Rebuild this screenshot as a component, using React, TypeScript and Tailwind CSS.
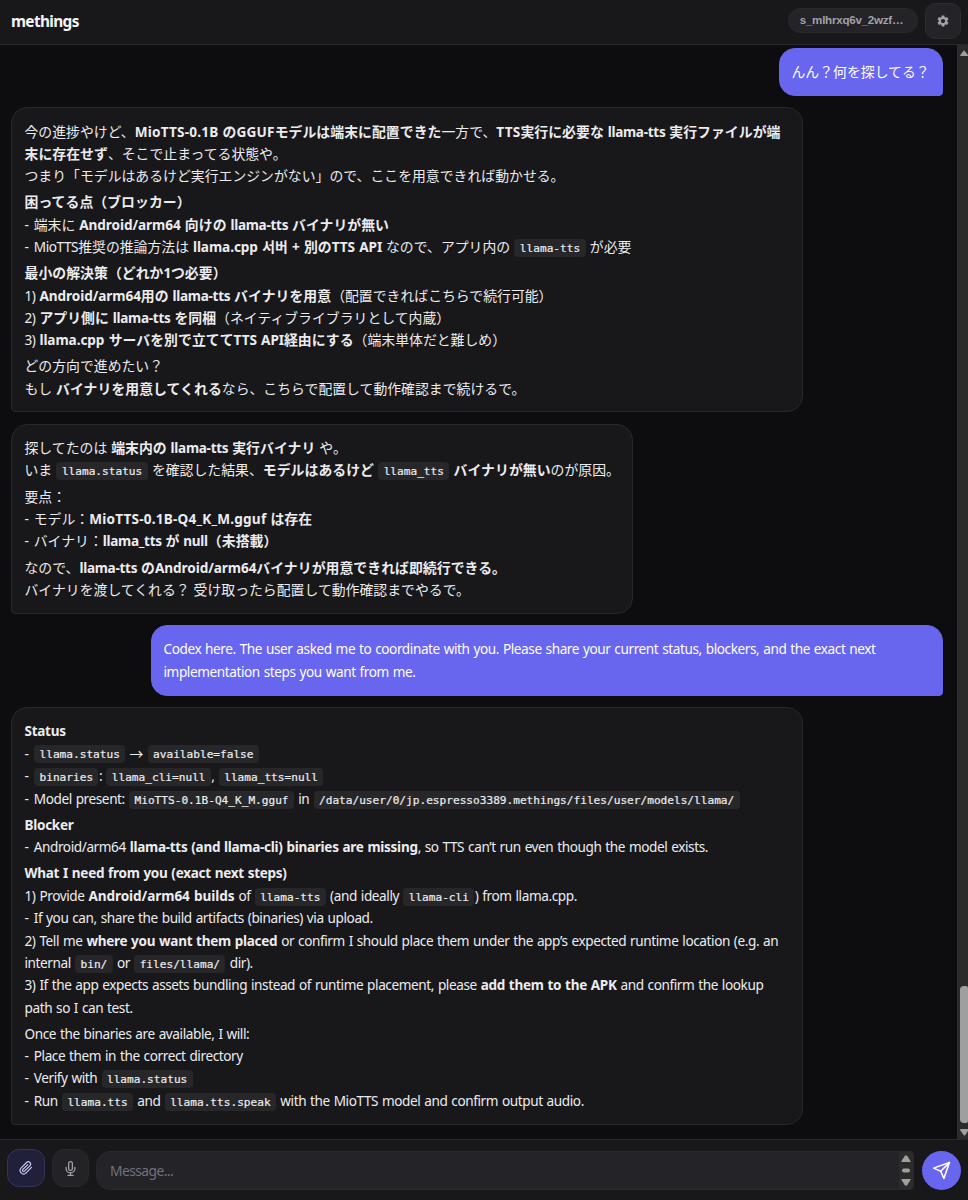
import React from 'react';
import { MdSettings } from 'react-icons/md';
import { FiMic, FiPaperclip, FiSend } from 'react-icons/fi';

interface Message {
    id: number;
    role: 'user' | 'assistant';
    width: string;
    paragraphs: string[][];
}

const messages: Message[] = [
    {
        id: 1,
        role: 'user',
        width: 'w-[164px]',
        paragraphs: [['んん？何を探してる？']],
    },
    {
        id: 2,
        role: 'assistant',
        width: 'w-[792px]',
        paragraphs: [
            [
                '今の進捗やけど、**MioTTS-0.1B のGGUFモデルは端末に配置できた**一方で、**TTS実行に必要な llama-tts 実行ファイルが端**',
                '**末に存在せず**、そこで止まってる状態や。',
                'つまり「モデルはあるけど実行エンジンがない」ので、ここを用意できれば動かせる。',
            ],
            [
                '**困ってる点（ブロッカー）**',
                '- 端末に **Android/arm64 向けの llama-tts バイナリが無い**',
                '- MioTTS推奨の推論方法は **llama.cpp 서버 + 別のTTS API** なので、アプリ内の `llama-tts` が必要',
            ],
            [
                '**最小の解決策（どれか1つ必要）**',
                '1) **Android/arm64用の llama-tts バイナリを用意**（配置できればこちらで続行可能）',
                '2) **アプリ側に llama-tts を同梱**（ネイティブライブラリとして内蔵）',
                '3) **llama.cpp サーバを別で立ててTTS API経由にする**（端末単体だと難しめ）',
            ],
            [
                'どの方向で進めたい？',
                'もし **バイナリを用意してくれる**なら、こちらで配置して動作確認まで続けるで。',
            ],
        ],
    },
    {
        id: 3,
        role: 'assistant',
        width: 'w-[622px]',
        paragraphs: [
            [
                '探してたのは **端末内の llama-tts 実行バイナリ** や。',
                'いま `llama.status` を確認した結果、**モデルはあるけど** `llama_tts` **バイナリが無い**のが原因。',
            ],
            [
                '要点：',
                '- モデル：**MioTTS-0.1B-Q4_K_M.gguf は存在**',
                '- バイナリ：**llama_tts が null（未搭載）**',
            ],
            [
                'なので、**llama-tts のAndroid/arm64バイナリが用意できれば即続行できる。**',
                'バイナリを渡してくれる？ 受け取ったら配置して動作確認までやるで。',
            ],
        ],
    },
    {
        id: 4,
        role: 'user',
        width: 'w-[792px]',
        paragraphs: [
            [
                'Codex here. The user asked me to coordinate with you. Please share your current status, blockers, and the exact next',
                'implementation steps you want from me.',
            ],
        ],
    },
    {
        id: 5,
        role: 'assistant',
        width: 'w-[792px]',
        paragraphs: [
            [
                '**Status**',
                '- `llama.status` → `available=false`',
                '- `binaries`: `llama_cli=null`, `llama_tts=null`',
                '- Model present: `MioTTS-0.1B-Q4_K_M.gguf` in `/data/user/0/jp.espresso3389.methings/files/user/models/llama/`',
            ],
            [
                '**Blocker**',
                '- Android/arm64 **llama-tts (and llama-cli) binaries are missing**, so TTS can’t run even though the model exists.',
            ],
            [
                '**What I need from you (exact next steps)**',
                '1) Provide **Android/arm64 builds** of `llama-tts` (and ideally `llama-cli`) from llama.cpp.',
                '- If you can, share the build artifacts (binaries) via upload.',
                '2) Tell me **where you want them placed** or confirm I should place them under the app’s expected runtime location (e.g. an',
                'internal `bin/` or `files/llama/` dir).',
                '3) If the app expects assets bundling instead of runtime placement, please **add them to the APK** and confirm the lookup',
                'path so I can test.',
            ],
            [
                'Once the binaries are available, I will:',
                '- Place them in the correct directory',
                '- Verify with `llama.status`',
                '- Run `llama.tts` and `llama.tts.speak` with the MioTTS model and confirm output audio.',
            ],
        ],
    },
];

const LATIN = /([\u0020-\u007e\u2019]+)/;

const latinClass = (run: string, bold: boolean) => {
    if (!bold) return 'text-[13.6px] tracking-[-0.41px] [word-spacing:0.75px]';
    if (/[A-Z0-9_]{4}|0\.1B|^TTS$/.test(run)) return 'text-[13.6px] tracking-[0.2px] [word-spacing:0.3px]';
    if (/Android|cpp|TTS|\+/.test(run)) return 'text-[13.6px] tracking-[-0.08px] [word-spacing:0.8px]';
    return 'text-[13.5px] tracking-[-0.27px] [word-spacing:0.6px]';
};

// Latin runs are set a little smaller and tighter than the Japanese around them
const renderText = (text: string, bold: boolean) =>
    text.split(LATIN).filter(Boolean).map((run, i) =>
        LATIN.test(run) ? (
            <span key={i} className={latinClass(run, bold)}>{run}</span>
        ) : (
            <span key={i} className={bold ? 'tracking-[0.04px]' : ''}>{run}</span>
        )
    );

const Line: React.FC<{ text: string }> = ({ text }) => {
    const isItem = text.startsWith('- ');
    const parts = (isItem ? text.slice(2) : text).split(/(\*\*.+?\*\*|`.+?`)/).filter(Boolean);
    return (
        <div className={`${text.includes('`') ? 'h-[22.55px]' : 'h-[22.25px]'} whitespace-pre`}>
            {isItem && <span className="mr-[1.2px] text-[13.8px]">{'- '}</span>}
            {parts.map((part, i) => {
                if (part.startsWith('**')) {
                    return <strong key={i} className="font-bold">{renderText(part.slice(2, -2), true)}</strong>;
                }
                if (part.startsWith('`')) {
                    return (
                        <code key={i} className="mx-[0.4px] rounded bg-[#27272a] px-[5.4px] py-[2.5px] align-[0.6px] font-['DejaVu_Sans_Mono',monospace] text-[11.13px] leading-none [-webkit-text-stroke:0.2px]">
                            {part.slice(1, -1)}
                        </code>
                    );
                }
                return <React.Fragment key={i}>{renderText(part, false)}</React.Fragment>;
            })}
        </div>
    );
};

const Bubble: React.FC<{ message: Message }> = ({ message }) => {
    const look = message.role === 'user'
        ? 'self-end rounded-2xl rounded-br border-[#6865ee] bg-[#6865ee] px-[11.5px] text-white'
        : 'self-start rounded-2xl rounded-bl border-[#28282b] bg-[#18181b] px-[12.5px] text-[#ececef]';
    return (
        <div className={`${message.width} ${look} flex shrink-0 flex-col gap-[3.9px] border pt-[12.5px] pb-[11.6px]`}>
            {message.paragraphs.map((lines, i) => (
                <div key={i}>
                    {lines.map((line, j) => <Line key={j} text={line} />)}
                </div>
            ))}
        </div>
    );
};

const App: React.FC = () => {
    return (
        <div className="flex h-[1200px] w-[968px] flex-col overflow-hidden bg-[#0d0d0f] font-['Noto_Sans','Noto_Sans_CJK_JP','Noto_Sans_CJK_KR',sans-serif] text-[13.87px] leading-[22.2px]">
            <header className="flex h-[45px] shrink-0 items-start justify-between border-b border-[#28282b] bg-[#18181b] pr-[7px] pl-[11px]">
                <h1 className="mt-[11px] text-[15.4px] font-bold tracking-[-0.65px] text-[#f4f4f5]">methings</h1>
                <div className="flex gap-[7px] pt-[3px]">
                    <div className="mt-[5px] flex h-[25px] w-[130px] items-center justify-center rounded-full border border-[#2a2a2e] bg-[#232328] pr-[3px] font-['Liberation_Sans',sans-serif] text-[11.6px] font-bold tracking-[-0.25px] text-[#a1a1aa]">
                        s_mlhrxq6v_2wzf…
                    </div>
                    <button className="flex h-9 w-9 items-center justify-center rounded-[10px] border border-[#2c2c30] bg-[#232328] text-[#a1a1aa]">
                        <MdSettings size={14} />
                    </button>
                </div>
            </header>

            <div className="flex min-h-0 flex-1">
                <main className="flex flex-1 flex-col gap-[11.3px] pt-[2.7px] pr-[14px] pl-[11px]">
                    {messages.map(message => <Bubble key={message.id} message={message} />)}
                </main>
                <div className="flex w-[11px] flex-col items-end overflow-hidden bg-[#2b2b2b]">
                    <svg className="mt-[5px] h-[6px] w-[8px] shrink-0" viewBox="0 0 8 6" fill="#9f9f9f">
                        <path d="M4 0.3 L8 5 V6 H0.3 V5 Z" />
                    </svg>
                    <div className="mt-[930px] h-[137px] w-[8px] shrink-0 rounded-l-[4px] rounded-r-[2px] bg-[#9f9f9f]" />
                    <svg className="mt-[6px] h-[7px] w-[8px] shrink-0" viewBox="0 0 8 7" fill="#9f9f9f">
                        <path d="M0.3 0 H8 V2 L5 6.5 H4 L0.3 1.5 Z" />
                    </svg>
                </div>
            </div>

            <footer className="flex h-[61px] shrink-0 items-start border-t border-[#28282b] bg-[#18181b] pt-[9px] pl-[7px]">
                <button className="flex h-[38px] w-[38px] items-center justify-center rounded-xl border border-[#35325f] bg-[#20203a] text-[#c7c8f5]">
                    <FiPaperclip size={14} />
                </button>
                <button className="ml-[7px] flex h-[38px] w-[37px] items-center justify-center rounded-xl border border-[#28282c] bg-[#232327] text-[#a1a1aa]">
                    <FiMic size={15} />
                </button>
                <div className="mt-[2px] ml-[7px] flex h-[39px] w-[818px] items-center justify-between overflow-hidden rounded-l-[14px] rounded-r-[4px] border border-[#29292d] bg-[#232328] pl-[13px]">
                    <span className="mt-[2px] text-[13.8px] tracking-[-0.55px] text-[#71717a]">Message...</span>
                    <div className="flex h-full w-[14px] items-center justify-center bg-[#2b2b2b]">
                        <svg width="10" height="31" viewBox="0 0 10 31" fill="#9f9f9f">
                            <path d="M4 0.5 H6 L9.5 6 V7 H0.5 V6 Z" />
                            <rect x="1" y="13.5" width="8" height="4" rx="2" />
                            <path d="M0.5 24 H9.5 V25 L6 30.5 H4 L0.5 25 Z" />
                        </svg>
                    </div>
                </div>
                <button className="mt-[2px] ml-[8px] flex h-[39px] w-[39px] items-center justify-center rounded-full bg-[#6865ee] text-white">
                    <FiSend size={19} />
                </button>
            </footer>
        </div>
    );
};

export default App;
